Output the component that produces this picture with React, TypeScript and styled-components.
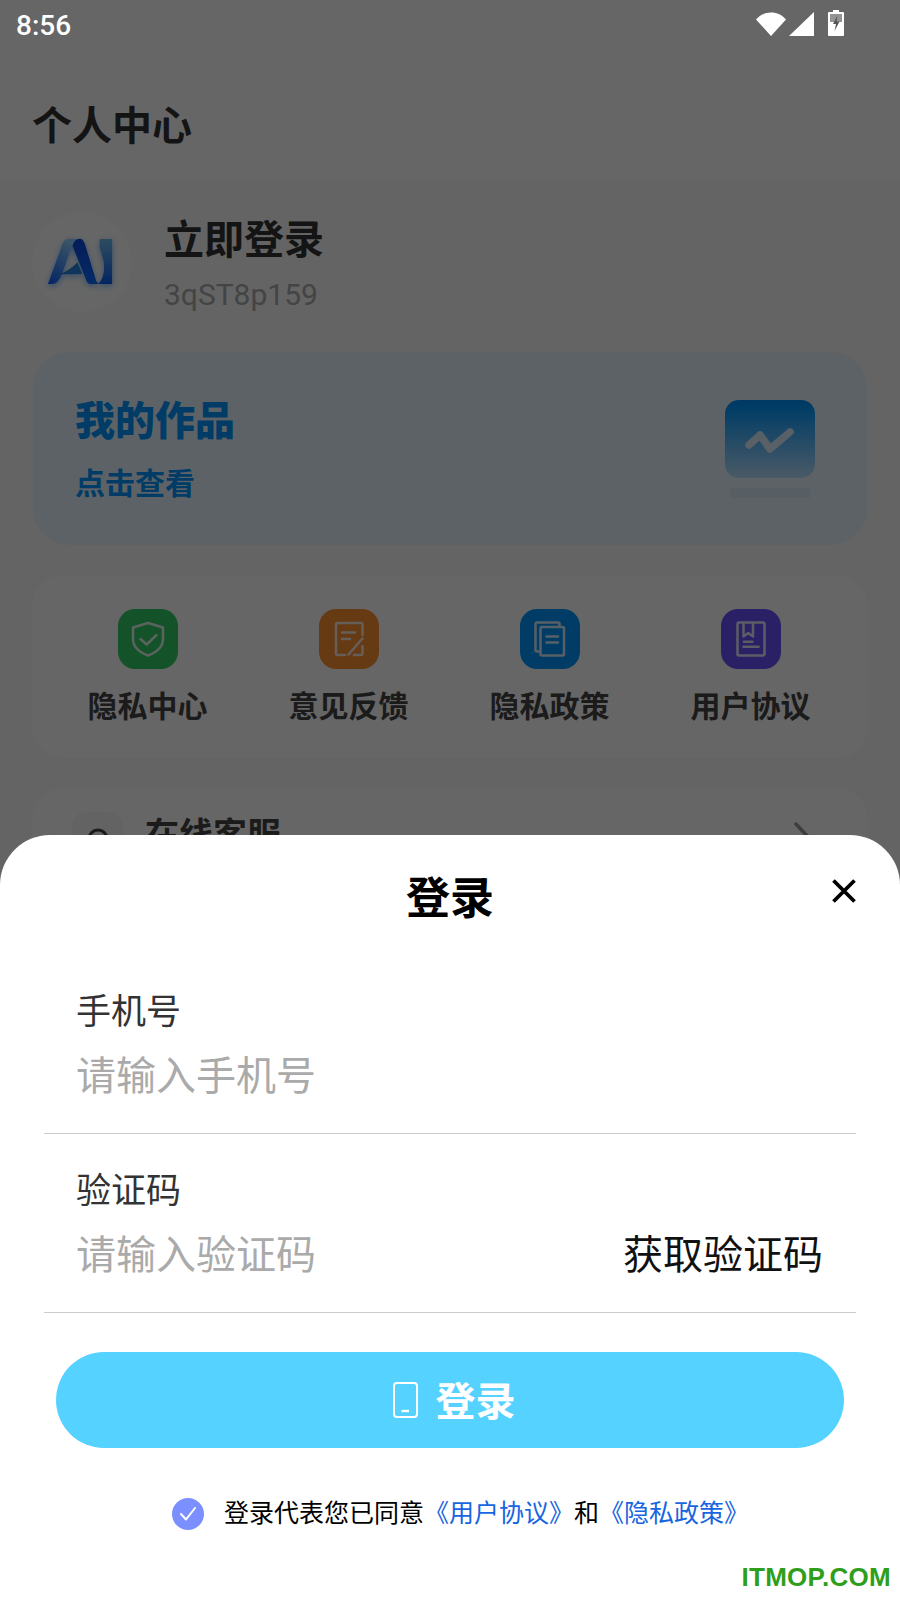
import React from 'react';
import styled, { createGlobalStyle } from 'styled-components';

const Global = createGlobalStyle`
  html, body { margin: 0; padding: 0; background: #fff; }
  body { font-family: Roboto, "Noto Sans CJK SC", sans-serif; }
  * { box-sizing: border-box; }
`;

const Screen = styled.div`
  position: relative;
  width: 900px;
  height: 1600px;
  overflow: hidden;
  background: #fafafa;
`;

const StatusBar = styled.div`
  position: relative;
  z-index: 2;
  height: 50px;
  display: flex;
  align-items: flex-start;
  justify-content: space-between;
  padding: 9px 56px 0 16px;
`;

const Time = styled.span`
  font-size: 28px;
  line-height: 33px;
  font-weight: 500;
  color: #fff;
`;

const StatusIcons = styled.div`
  display: flex;
  align-items: flex-start;
  margin-top: 3px;
`;

const Header = styled.header`
  height: 180px;
  margin-top: -50px;
  padding: 102px 32px 0;
  background: #fff;
`;

const PageTitle = styled.h1`
  margin: 0;
  font-size: 40px;
  line-height: 50px;
  font-weight: 700;
  color: #333;
`;

const Profile = styled.section`
  display: flex;
  align-items: flex-start;
  gap: 32px;
  padding: 32px 32px 0;
  height: 172px;
`;

const Avatar = styled.div`
  width: 100px;
  height: 100px;
  border-radius: 50%;
  background: #fff;
  display: flex;
  align-items: center;
  justify-content: center;
  padding: 0 5px 2px 0;
`;

const LogoSvg = styled.svg`
  filter: drop-shadow(0 2px 3px rgba(30, 130, 255, 0.55));
`;

const ProfileText = styled.div`
  display: flex;
  flex-direction: column;
  gap: 12px;
  margin-top: 5px;
`;

const ProfileName = styled.div`
  font-size: 40px;
  line-height: 48px;
  font-weight: 700;
  color: #333;
`;

const ProfileId = styled.div`
  font-size: 30px;
  line-height: 36px;
  color: #aaa;
`;

const WorksCard = styled.section`
  margin: 0 33px;
  height: 193px;
  border-radius: 36px;
  background: #e6f5ff;
  display: flex;
  justify-content: space-between;
  padding: 46px 52px 0 42px;
`;

const WorksTitle = styled.div`
  font-size: 40px;
  line-height: 48px;
  font-weight: 900;
  color: #0096ff;
`;

const WorksSub = styled.div`
  margin-top: 18px;
  font-size: 30px;
  line-height: 40px;
  font-weight: 700;
  color: #0096ff;
`;

const WorksIconWrap = styled.div`
  display: flex;
  flex-direction: column;
  align-items: center;
  margin-top: 2px;
  width: 90px;
`;

const WorksTile = styled.div`
  width: 90px;
  height: 78px;
  border-radius: 14px;
  background: linear-gradient(180deg, #0090f5 0%, #0096ff 8%, #b9e1ff 100%);
  display: flex;
  align-items: center;
  justify-content: center;
  padding-top: 8px;
`;

const WorksShadow = styled.div`
  width: 80px;
  height: 10px;
  margin-top: 10px;
  background: #dcedf9;
`;

const ShortcutCard = styled.section`
  margin: 30px 32px 0 32px;
  height: 183px;
  border-radius: 32px;
  background: #fff;
  padding: 34px 15px 0;
  display: grid;
  grid-template-columns: repeat(4, 201px);
`;

const Shortcut = styled.div`
  display: flex;
  flex-direction: column;
  align-items: center;
`;

const ShortcutTile = styled.div<{ $bg: string }>`
  width: 60px;
  height: 60px;
  border-radius: 17px;
  background: ${p => p.$bg};
`;

const ShortcutLabel = styled.div`
  margin-top: 18px;
  font-size: 30px;
  line-height: 40px;
  font-weight: 700;
  color: #444;
`;

const ServiceCard = styled.section`
  margin: 30px 32px 0;
  height: 200px;
  border-radius: 32px;
  background: #fff;
  padding: 24px 56px 0 40px;
  display: flex;
  align-items: flex-start;
`;

const ServiceIcon = styled.div`
  width: 51px;
  height: 51px;
  border-radius: 14px;
  background: #f7f7f7;
  display: flex;
  align-items: center;
  justify-content: center;
`;

const ServiceText = styled.div`
  margin-left: 22px;
  flex: 1;
  font-size: 34px;
  line-height: 46px;
  font-weight: 700;
  color: #444;
`;

const Scrim = styled.div`
  position: absolute;
  inset: 0;
  background: rgba(0, 0, 0, 0.6);
`;

const Sheet = styled.div`
  position: absolute;
  left: 0;
  right: 0;
  bottom: 0;
  height: 765px;
  background: #fff;
  border-radius: 50px 50px 0 0;
  display: flex;
  flex-direction: column;
  padding-top: 36px;
`;

const SheetTitle = styled.h2`
  margin: 0 0 28px;
  text-align: center;
  font-size: 44px;
  line-height: 56px;
  font-weight: 700;
  color: #000;
`;

const CloseButton = styled.button`
  position: absolute;
  top: 44px;
  right: 44px;
  width: 24px;
  height: 24px;
  padding: 0;
  border: 0;
  background: none;
  display: block;
`;

const Field = styled.div`
  margin: 0 44px;
  height: 179px;
  padding: 0 33px 0 32px;
  border-bottom: 1px solid #ccc;
  display: flex;
  flex-direction: column;
`;

const FieldLabel = styled.div`
  font-size: 35px;
  line-height: 44px;
  color: #333;
  margin-top: 36px;
`;

const FieldRow = styled.div`
  margin-top: 17px;
  display: flex;
  justify-content: space-between;
  font-size: 40px;
  line-height: 50px;
`;

const Placeholder = styled.span`
  color: #aaa;
`;

const CodeLink = styled.span`
  color: #111;
`;

const LoginButton = styled.button`
  margin: 39px 56px 0;
  height: 96px;
  border: 0;
  border-radius: 48px;
  background: #55d2ff;
  color: #fff;
  display: flex;
  align-items: center;
  justify-content: center;
  gap: 18px;
  font-family: inherit;
  font-size: 40px;
  font-weight: 700;
  padding: 0 0 0 8px;
`;

const LoginLabel = styled.span`
  margin-bottom: 2px;
`;

const Agreement = styled.div`
  margin-top: 50px;
  display: flex;
  align-items: center;
  padding-left: 172px;
  font-size: 25px;
  line-height: 32px;
  color: #000;
`;

const CheckDot = styled.div`
  width: 32px;
  height: 32px;
  margin-right: 20px;
  border-radius: 50%;
  background: #7b8fff;
  display: flex;
  align-items: center;
  justify-content: center;
`;

const DocLink = styled.span`
  color: #1765e0;
`;

const Watermark = styled.div`
  position: absolute;
  right: 9px;
  bottom: 8px;
  font-family: "Liberation Sans", sans-serif;
  font-size: 26px;
  line-height: 30px;
  letter-spacing: 0.3px;
  font-weight: 700;
  color: #2f9e1a;
`;

const Wifi = () => (
  <svg width="30" height="24" viewBox="0 0 30 24">
    <path d="M0 7.500C4 3 9 .5 15 .5s11 2.500 15 7L15 24z" fill="#fff" />
  </svg>
);
const Signal = () => (
  <svg width="25" height="24" viewBox="0 0 25 24" style={{ marginLeft: 3 }}>
    <path d="M25 0v24H0z" fill="#fff" />
  </svg>
);
const Battery = () => (
  <svg width="16" height="26" viewBox="0 0 16 26" style={{ marginLeft: 14, marginTop: -2 }}>
    <path d="M5 0h6v2h4a1 1 0 0 1 1 1v22a1 1 0 0 1-1 1H1a1 1 0 0 1-1-1V3a1 1 0 0 1 1-1h4z" fill="#fff" />
    <path d="M2 4h12v8H2z" fill="#666" opacity=".7" />
    <path d="M9.500 5.500 5 14h3l-1.500 7L11.500 11.500h-3z" fill="#555" />
  </svg>
);

const AiLogo = () => (
  <LogoSvg width="66" height="47" viewBox="80 85 195 140">
    <defs>
      <linearGradient id="aiL" x1="0" y1="1" x2="0.6" y2="0">
        <stop offset="0" stopColor="#0a5aff" />
        <stop offset="1" stopColor="#8ed2ff" />
      </linearGradient>
      <linearGradient id="aiR" x1="0" y1="0" x2="0" y2="1">
        <stop offset="0" stopColor="#0a48e0" />
        <stop offset="1" stopColor="#0a6cff" />
      </linearGradient>
      <linearGradient id="aiI" x1="0" y1="0" x2="0" y2="1">
        <stop offset="0" stopColor="#6fc0f0" />
        <stop offset="1" stopColor="#0a5cf0" />
      </linearGradient>
    </defs>
    <path d="M82 222 126 102Q131 88 146 88H172Q156 94 148 124L124 192Q112 222 94 222Z" fill="url(#aiL)" />
    <path d="M106 194Q138 190 170 158L184 192Z" fill="#2a86e0" />
    <path d="M155 108Q162 86 178 87 188 88 193 106L226 214 234 222H208Q200 222 196 210Z" fill="url(#aiR)" />
    <path d="M236 88H273V222H232Q256 196 247 150L236 112Z" fill="url(#aiI)" />
  </LogoSvg>
);

const TrendIcon = () => (
  <svg width="50" height="30" viewBox="0 0 50 30">
    <path d="M4 17 15 7 25 21 45 4" fill="none" stroke="#fff" strokeWidth="7.500" strokeLinecap="round" strokeLinejoin="round" opacity=".8" />
  </svg>
);

const iconStroke = { fill: 'none', stroke: '#fff', strokeWidth: 2.5, strokeLinecap: 'round' as const, strokeLinejoin: 'round' as const, opacity: 0.85 };

const ShieldIcon = () => (
  <svg width="60" height="60" viewBox="0 0 60 60" {...iconStroke}>
    <path d="M30 14 45 18.500V30C45 38 38 43.500 30 46.500 22 43.500 15 38 15 30V18.500Z" />
    <path d="M22.500 30 28.700 35.500 38.500 26" />
  </svg>
);
const EditIcon = () => (
  <svg width="60" height="60" viewBox="0 0 60 60" {...iconStroke}>
    <path d="M43.500 26V15.500A1.500 1.500 0 0 0 42 14H18.500A1.500 1.500 0 0 0 17 15.500V44.500A1.500 1.500 0 0 0 18.500 46H26" />
    <path d="M35 46H42A1.500 1.500 0 0 0 43.500 44.500V37" />
    <path d="M29.500 45.500 43.500 29.500" />
    <path d="M23 23.500H36M23 30H31" />
  </svg>
);
const CopyIcon = () => (
  <svg width="60" height="60" viewBox="0 0 60 60" {...iconStroke}>
    <path d="M20 42.500H17A1.500 1.500 0 0 1 15.500 41V15A1.500 1.500 0 0 1 17 13.500H38A1.500 1.500 0 0 1 39.500 15V17.500" />
    <rect x="20.500" y="18" width="23.500" height="28.500" rx="1.500" />
    <path d="M26.500 27.500H38M26.500 33.500H38" />
  </svg>
);
const BookIcon = () => (
  <svg width="60" height="60" viewBox="0 0 60 60" {...iconStroke}>
    <rect x="16.500" y="13.500" width="27" height="33" rx="1.500" />
    <path d="M22.500 14V27.500L27.300 24 32 27.500V14" />
    <path d="M23 32.700H31.500M22.500 37.700H37.500" />
  </svg>
);
const BellIcon = () => (
  <svg width="36" height="36" viewBox="0 0 36 36" fill="none" stroke="#444" strokeWidth="3" style={{ marginTop: 6 }}>
    <path d="M5 26 9 20V16a9 9 0 0 1 18 0v4l4 6" />
  </svg>
);
const Chevron = () => (
  <svg width="18" height="34" viewBox="0 0 18 34" fill="none" stroke="#999" strokeWidth="3.500" strokeLinecap="round" style={{ marginTop: 10 }}>
    <path d="M2 2 16 17 2 32" />
  </svg>
);
const CloseIcon = () => (
  <svg width="24" height="24" viewBox="0 0 24 24" fill="none" stroke="#000" strokeWidth="3.800">
    <path d="M1.500 1.500 22.500 22.500M22.500 1.500 1.500 22.500" />
  </svg>
);
const PhoneIcon = () => (
  <svg width="25" height="36" viewBox="0 0 25 36" fill="none" stroke="#fff" strokeWidth="2">
    <rect x="1" y="1" width="23" height="34" rx="3" />
    <path d="M8.500 29H16" strokeWidth="2.400" />
  </svg>
);
const CheckIcon = () => (
  <svg width="18" height="16" viewBox="0 0 18 16" fill="none" stroke="#fff" strokeWidth="2" strokeLinecap="round" strokeLinejoin="round">
    <path d="M2 8 7 13.500 16 2" />
  </svg>
);

const shortcuts = [
  { label: '隐私中心', bg: '#34cd69', icon: <ShieldIcon /> },
  { label: '意见反馈', bg: '#ff912d', icon: <EditIcon /> },
  { label: '隐私政策', bg: '#0096ff', icon: <CopyIcon /> },
  { label: '用户协议', bg: '#6950ff', icon: <BookIcon /> },
];

export default function App() {
  return (
    <Screen>
      <Global />
      <StatusBar>
        <Time>8:56</Time>
        <StatusIcons>
          <Wifi />
          <Signal />
          <Battery />
        </StatusIcons>
      </StatusBar>
      <Header>
        <PageTitle>个人中心</PageTitle>
      </Header>
      <Profile>
        <Avatar>
          <AiLogo />
        </Avatar>
        <ProfileText>
          <ProfileName>立即登录</ProfileName>
          <ProfileId>3qST8p159</ProfileId>
        </ProfileText>
      </Profile>
      <WorksCard>
        <div>
          <WorksTitle>我的作品</WorksTitle>
          <WorksSub>点击查看</WorksSub>
        </div>
        <WorksIconWrap>
          <WorksTile>
            <TrendIcon />
          </WorksTile>
          <WorksShadow />
        </WorksIconWrap>
      </WorksCard>
      <ShortcutCard>
        {shortcuts.map(s => (
          <Shortcut key={s.label}>
            <ShortcutTile $bg={s.bg}>{s.icon}</ShortcutTile>
            <ShortcutLabel>{s.label}</ShortcutLabel>
          </Shortcut>
        ))}
      </ShortcutCard>
      <ServiceCard>
        <ServiceIcon>
          <BellIcon />
        </ServiceIcon>
        <ServiceText>在线客服</ServiceText>
        <Chevron />
      </ServiceCard>
      <Scrim />
      <Sheet>
        <SheetTitle>登录</SheetTitle>
        <CloseButton aria-label="关闭">
          <CloseIcon />
        </CloseButton>
        <Field>
          <FieldLabel>手机号</FieldLabel>
          <FieldRow>
            <Placeholder>请输入手机号</Placeholder>
          </FieldRow>
        </Field>
        <Field>
          <FieldLabel>验证码</FieldLabel>
          <FieldRow>
            <Placeholder>请输入验证码</Placeholder>
            <CodeLink>获取验证码</CodeLink>
          </FieldRow>
        </Field>
        <LoginButton>
          <PhoneIcon />
          <LoginLabel>登录</LoginLabel>
        </LoginButton>
        <Agreement>
          <CheckDot>
            <CheckIcon />
          </CheckDot>
          登录代表您已同意<DocLink>《用户协议》</DocLink>和<DocLink>《隐私政策》</DocLink>
        </Agreement>
      </Sheet>
      <Watermark>ITMOP.COM</Watermark>
    </Screen>
  );
}
